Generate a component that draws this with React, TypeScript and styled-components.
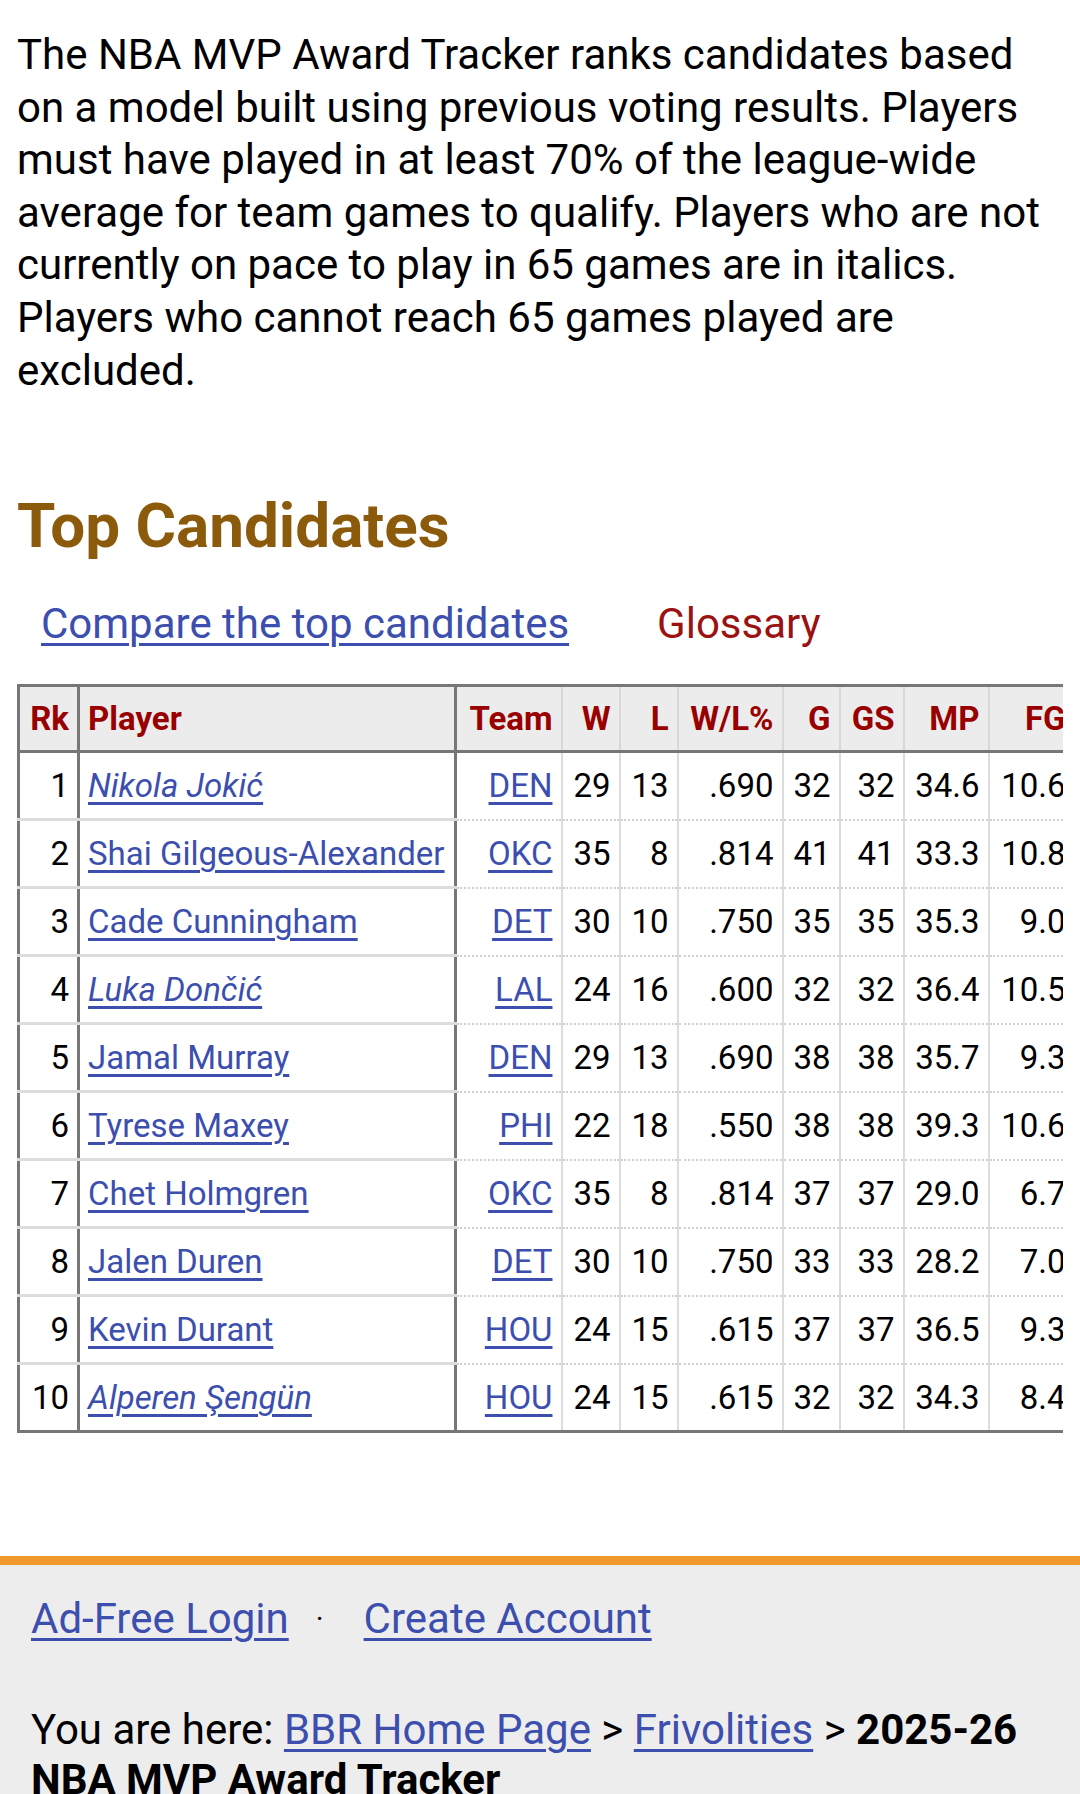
import React from "react"
import styled, { createGlobalStyle } from "styled-components"

interface Candidate {
  rk: number
  name: string
  italic: boolean
  team: string
  w: number
  l: number
  pct: string
  g: number
  gs: number
  mp: string
  fg: string
}

const candidates: Candidate[] = [
  { rk: 1, name: "Nikola Jokić", italic: true, team: "DEN", w: 29, l: 13, pct: ".690", g: 32, gs: 32, mp: "34.6", fg: "10.6" },
  { rk: 2, name: "Shai Gilgeous-Alexander", italic: false, team: "OKC", w: 35, l: 8, pct: ".814", g: 41, gs: 41, mp: "33.3", fg: "10.8" },
  { rk: 3, name: "Cade Cunningham", italic: false, team: "DET", w: 30, l: 10, pct: ".750", g: 35, gs: 35, mp: "35.3", fg: "9.0" },
  { rk: 4, name: "Luka Dončić", italic: true, team: "LAL", w: 24, l: 16, pct: ".600", g: 32, gs: 32, mp: "36.4", fg: "10.5" },
  { rk: 5, name: "Jamal Murray", italic: false, team: "DEN", w: 29, l: 13, pct: ".690", g: 38, gs: 38, mp: "35.7", fg: "9.3" },
  { rk: 6, name: "Tyrese Maxey", italic: false, team: "PHI", w: 22, l: 18, pct: ".550", g: 38, gs: 38, mp: "39.3", fg: "10.6" },
  { rk: 7, name: "Chet Holmgren", italic: false, team: "OKC", w: 35, l: 8, pct: ".814", g: 37, gs: 37, mp: "29.0", fg: "6.7" },
  { rk: 8, name: "Jalen Duren", italic: false, team: "DET", w: 30, l: 10, pct: ".750", g: 33, gs: 33, mp: "28.2", fg: "7.0" },
  { rk: 9, name: "Kevin Durant", italic: false, team: "HOU", w: 24, l: 15, pct: ".615", g: 37, gs: 37, mp: "36.5", fg: "9.3" },
  { rk: 10, name: "Alperen Şengün", italic: true, team: "HOU", w: 24, l: 15, pct: ".615", g: 32, gs: 32, mp: "34.3", fg: "8.4" },
]

const columns = [
  { key: "rk", label: "Rk", width: 60 },
  { key: "player", label: "Player", width: 377 },
  { key: "team", label: "Team", width: 106 },
  { key: "w", label: "W", width: 58 },
  { key: "l", label: "L", width: 58 },
  { key: "pct", label: "W/L%", width: 105 },
  { key: "g", label: "G", width: 57 },
  { key: "gs", label: "GS", width: 64 },
  { key: "mp", label: "MP", width: 85 },
  { key: "fg", label: "FG", width: 86 },
]

const GlobalStyle = createGlobalStyle`
  html, body {
    margin: 0;
    padding: 0;
    background: #ffffff;
  }
  body {
    font-family: Roboto, "Noto Sans", Arial, sans-serif;
    color: #000;
  }
`

const Page = styled.div`
  width: 1080px;
  min-height: 1794px;
  display: flex;
  flex-direction: column;
`

const Content = styled.main`
  padding: 29px 17px 0;
`

const Intro = styled.p`
  margin: 0;
  font-size: 42px;
  line-height: 52.6px;
`

const Heading = styled.h2`
  margin: 93px 0 0;
  font-size: 62px;
  line-height: 72px;
  font-weight: 700;
  color: #8c5a0b;
`

const LinkRow = styled.div`
  display: flex;
  align-items: center;
  gap: 88px;
  margin-top: 36px;
  padding-left: 24px;
  font-size: 42px;
  line-height: 52px;
`

const BlueLink = styled.a<{ $italic?: boolean }>`
  color: #3c4fae;
  text-decoration: underline;
  text-underline-offset: 5px;
  text-decoration-thickness: 3px;
  font-style: ${({ $italic }) => ($italic ? "italic" : "normal")};
`

const GlossaryLink = styled.span`
  color: #9b1212;
`

const TableWrap = styled.div`
  margin-top: 34px;
  width: 1046px;
  overflow: hidden;
`

const Table = styled.table`
  border-collapse: collapse;
  table-layout: fixed;
  width: 1056px;
  border-top: 3px solid #777;
  border-left: 3px solid #777;
  border-bottom: 3px solid #777;
  font-size: 33px;
`

type Kind = "rk" | "player" | "stat"

const HeadCell = styled.th<{ $kind: Kind }>`
  height: 63px;
  padding: 0 8px;
  background: #ececec;
  color: #990000;
  font-weight: 700;
  text-align: ${({ $kind }) => ($kind === "player" ? "left" : "right")};
  border-bottom: 3px solid #777;
  border-right: ${({ $kind }) => ($kind === "stat" ? "2px solid #d8d8d8" : "3px solid #777")};
  white-space: nowrap;
`

const Row = styled.tr``

const Cell = styled.td<{ $kind: Kind; $last: boolean }>`
  height: 65px;
  padding: 0 8px;
  text-align: ${({ $kind }) => ($kind === "player" ? "left" : "right")};
  white-space: nowrap;
  border-right: ${({ $kind }) => ($kind === "stat" ? "2px solid #dcdcdc" : "3px solid #777")};
  border-bottom: ${({ $kind, $last }) =>
    $last ? "none" : $kind === "stat" ? "2px dotted #d0d0d0" : "3px solid #dcdcdc"};
`

const Footer = styled.footer`
  margin-top: 123px;
  flex: 1;
  background: #eeeded;
  border-top: 9px solid #f0992c;
  padding: 28px 31px 0;
  font-size: 42px;
`

const AccountRow = styled.div`
  display: flex;
  align-items: center;
  line-height: 52px;
`

const Dot = styled.span`
  margin: 0 40px 0 27px;
  font-size: 30px;
`

const Breadcrumb = styled.div`
  margin-top: 60px;
  line-height: 50px;

  & strong {
    font-weight: 700;
  }
`

const statKeys = ["team", "w", "l", "pct", "g", "gs", "mp", "fg"] as const

const App = (): JSX.Element => {
  return (
    <Page>
      <GlobalStyle />
      <Content>
        <Intro>
          The NBA MVP Award Tracker ranks candidates based on a model built using previous voting
          results. Players must have played in at least 70% of the league-wide average for team
          games to qualify. Players who are not currently on pace to play in 65 games are in
          italics. Players who cannot reach 65 games played are excluded.
        </Intro>
        <Heading>Top Candidates</Heading>
        <LinkRow>
          <BlueLink href="#">Compare the top candidates</BlueLink>
          <GlossaryLink>Glossary</GlossaryLink>
        </LinkRow>
        <TableWrap>
          <Table>
            <colgroup>
              {columns.map((col) => (
                <col key={col.key} style={{ width: col.width }} />
              ))}
            </colgroup>
            <thead>
              <tr>
                {columns.map((col) => (
                  <HeadCell
                    key={col.key}
                    $kind={col.key === "rk" ? "rk" : col.key === "player" ? "player" : "stat"}
                  >
                    {col.label}
                  </HeadCell>
                ))}
              </tr>
            </thead>
            <tbody>
              {candidates.map((c, i) => {
                const last = i === candidates.length - 1
                return (
                  <Row key={`candidate-${c.rk}`}>
                    <Cell $kind="rk" $last={last}>
                      {c.rk}
                    </Cell>
                    <Cell $kind="player" $last={last}>
                      <BlueLink href="#" $italic={c.italic}>
                        {c.name}
                      </BlueLink>
                    </Cell>
                    {statKeys.map((key) => (
                      <Cell key={key} $kind="stat" $last={last}>
                        {key === "team" ? <BlueLink href="#">{c.team}</BlueLink> : c[key]}
                      </Cell>
                    ))}
                  </Row>
                )
              })}
            </tbody>
          </Table>
        </TableWrap>
      </Content>
      <Footer>
        <AccountRow>
          <BlueLink href="#">Ad-Free Login</BlueLink>
          <Dot>·</Dot>
          <BlueLink href="#">Create Account</BlueLink>
        </AccountRow>
        <Breadcrumb>
          You are here: <BlueLink href="#">BBR Home Page</BlueLink> &gt;{" "}
          <BlueLink href="#">Frivolities</BlueLink> &gt; <strong>2025-26 NBA MVP Award Tracker</strong>
        </Breadcrumb>
      </Footer>
    </Page>
  )
}

export default App
